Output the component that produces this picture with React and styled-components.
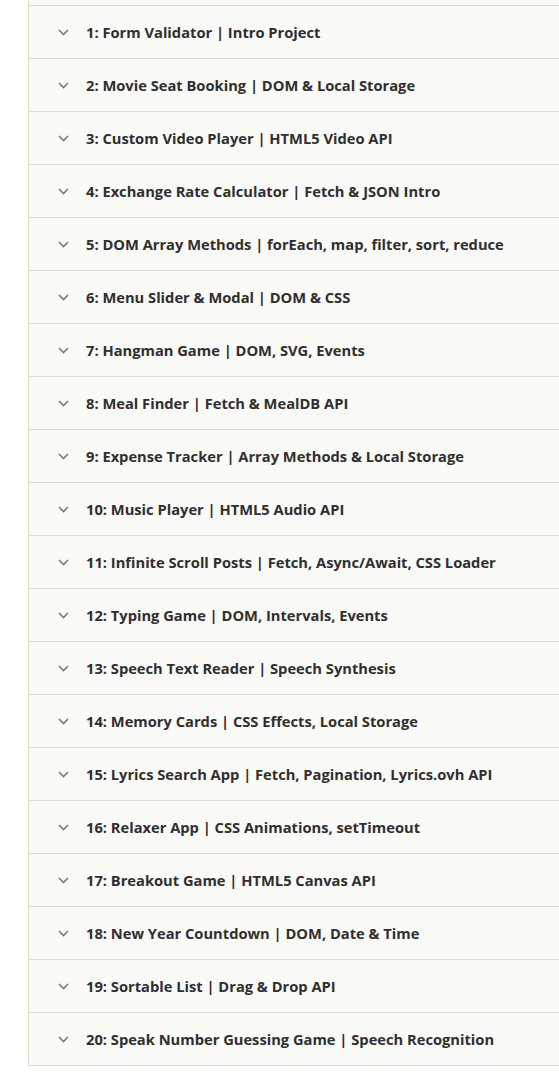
import React from 'react';
import styled, { createGlobalStyle } from 'styled-components';

const GlobalStyle = createGlobalStyle`
  html, body {
    margin: 0;
    padding: 0;
    background: #fff;
    overflow: hidden;
  }
  body {
    font-family: "Open Sans", "Noto Sans", "Liberation Sans", sans-serif;
  }
`;

const projects = [
  '1: Form Validator | Intro Project',
  '2: Movie Seat Booking | DOM & Local Storage',
  '3: Custom Video Player | HTML5 Video API',
  '4: Exchange Rate Calculator | Fetch & JSON Intro',
  '5: DOM Array Methods | forEach, map, filter, sort, reduce',
  '6: Menu Slider & Modal | DOM & CSS',
  '7: Hangman Game | DOM, SVG, Events',
  '8: Meal Finder | Fetch & MealDB API',
  '9: Expense Tracker | Array Methods & Local Storage',
  '10: Music Player | HTML5 Audio API',
  '11: Infinite Scroll Posts | Fetch, Async/Await, CSS Loader',
  '12: Typing Game | DOM, Intervals, Events',
  '13: Speech Text Reader | Speech Synthesis',
  '14: Memory Cards | CSS Effects, Local Storage',
  '15: Lyrics Search App | Fetch, Pagination, Lyrics.ovh API',
  '16: Relaxer App | CSS Animations, setTimeout',
  '17: Breakout Game | HTML5 Canvas API',
  '18: New Year Countdown | DOM, Date & Time',
  '19: Sortable List | Drag & Drop API',
  '20: Speak Number Guessing Game | Speech Recognition',
];

const Chevron = () => (
  <svg width="11" height="7" viewBox="0 0 11 7" fill="none">
    <path d="M1 1l4.5 4.5L10 1" stroke="#7a7a7a" strokeWidth="1.6" />
  </svg>
);

const App = () => {
  return (
    <>
      <GlobalStyle />
      <Curriculum>
        {projects.map((title) => (
          <Lecture key={title}>
            <Toggle>
              <Chevron />
            </Toggle>
            <Title>{title}</Title>
          </Lecture>
        ))}
      </Curriculum>
    </>
  );
};

const Curriculum = styled.section`
  margin-left: 28px;
  padding-top: 5px;
  background: #fafaf6;
  border-left: 1px solid #dcdccc;
  border-bottom: 1px solid #dcdccc;
`;

const Lecture = styled.div`
  display: flex;
  align-items: center;
  height: 52px;
  border-top: 1px solid #dcdccc;
`;

const Toggle = styled.span`
  display: flex;
  align-items: center;
  justify-content: center;
  width: 13px;
  margin-left: 28px;
  margin-right: 16px;
  padding-top: 1px;
`;

const Title = styled.h4`
  margin: 0;
  font-size: 14.7px;
  font-weight: 700;
  color: #2f2f2f;
  white-space: nowrap;
`;

export default App;
